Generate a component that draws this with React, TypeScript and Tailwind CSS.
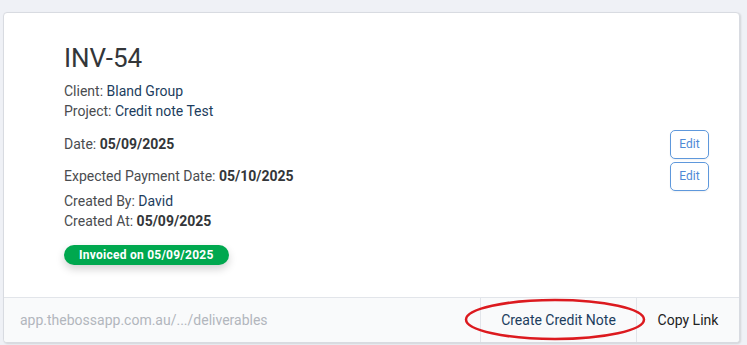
import React from "react";

export default function App() {
  return (
    <div className="w-[747px] h-[345px] bg-[#eff1f6] overflow-hidden" style={{ fontFamily: "Roboto, 'Noto Sans', sans-serif" }}>
      <div className="ml-[3px] mt-[12px] w-[737px] h-[331px] bg-white border border-[#d8dbe1] rounded-[4px] shadow-[1px_1px_2px_rgba(0,0,0,0.12)] flex flex-col overflow-hidden">
        <div className="flex-1 pl-[60px] pr-[30px] pt-[29px]">
          <div className="text-[26px] leading-[32px] text-[#333639]">INV-54</div>
          <div className="mt-[7px] text-[14px] leading-[20px] text-[#4a4c4f]">
            Client: <span className="text-[#1c3d5e]">Bland Group</span>
          </div>
          <div className="text-[14px] leading-[20px] text-[#4a4c4f]">
            Project: <span className="text-[#1c3d5e]">Credit note Test</span>
          </div>
          <div className="mt-[9px] flex items-center justify-between h-[28px] text-[14px] text-[#4a4c4f]">
            <div>
              Date: <span className="font-bold text-[#333639]">05/09/2025</span>
            </div>
            <button className="w-[39px] h-[29px] border border-[#5e98dc] rounded-[5px] text-[12px] text-[#4f8ad6] bg-white shadow-[0_1px_2px_rgba(0,0,0,0.06)]">Edit</button>
          </div>
          <div className="mt-[4px] flex items-center justify-between h-[28px] text-[14px] text-[#4a4c4f]">
            <div>
              Expected Payment Date: <span className="font-bold text-[#333639]">05/10/2025</span>
            </div>
            <button className="w-[39px] h-[29px] border border-[#5e98dc] rounded-[5px] text-[12px] text-[#4f8ad6] bg-white shadow-[0_1px_2px_rgba(0,0,0,0.06)]">Edit</button>
          </div>
          <div className="mt-[1px] text-[14px] leading-[20px] text-[#4a4c4f]">
            Created By: <span className="text-[#1c3d5e]">David</span>
          </div>
          <div className="text-[14px] leading-[20px] text-[#4a4c4f]">
            Created At: <span className="font-bold text-[#333639]">05/09/2025</span>
          </div>
          <div className="mt-[14px] inline-flex items-center h-[20px] px-[15px] rounded-full bg-[#00a84f] text-white text-[12px] font-bold tracking-[0.25px] shadow-[0_4px_8px_rgba(0,0,0,0.18)]">
            Invoiced on 05/09/2025
          </div>
        </div>
        <div className="relative h-[45px] border-t border-[#e2e5ea] bg-[#f9fafb] flex items-stretch text-[14px]">
          <div className="flex-1 flex items-center pl-[16px] text-[#b2b6bd]">app.thebossapp.com.au/.../deliverables</div>
          <div className="w-[156px] border-l border-[#e2e5ea] flex items-center justify-center text-[#1c3d5e]">Create Credit Note</div>
          <div className="w-[103px] border-l border-[#e2e5ea] flex items-center justify-center text-[#222]">Copy Link</div>
          <svg className="absolute left-[459px] top-0 pointer-events-none" width="186" height="45" viewBox="0 0 186 45">
            <ellipse cx="92" cy="21.5" rx="89" ry="19.5" fill="none" stroke="#dc1a1f" strokeWidth="2.5" />
          </svg>
        </div>
      </div>
    </div>
  );
}
